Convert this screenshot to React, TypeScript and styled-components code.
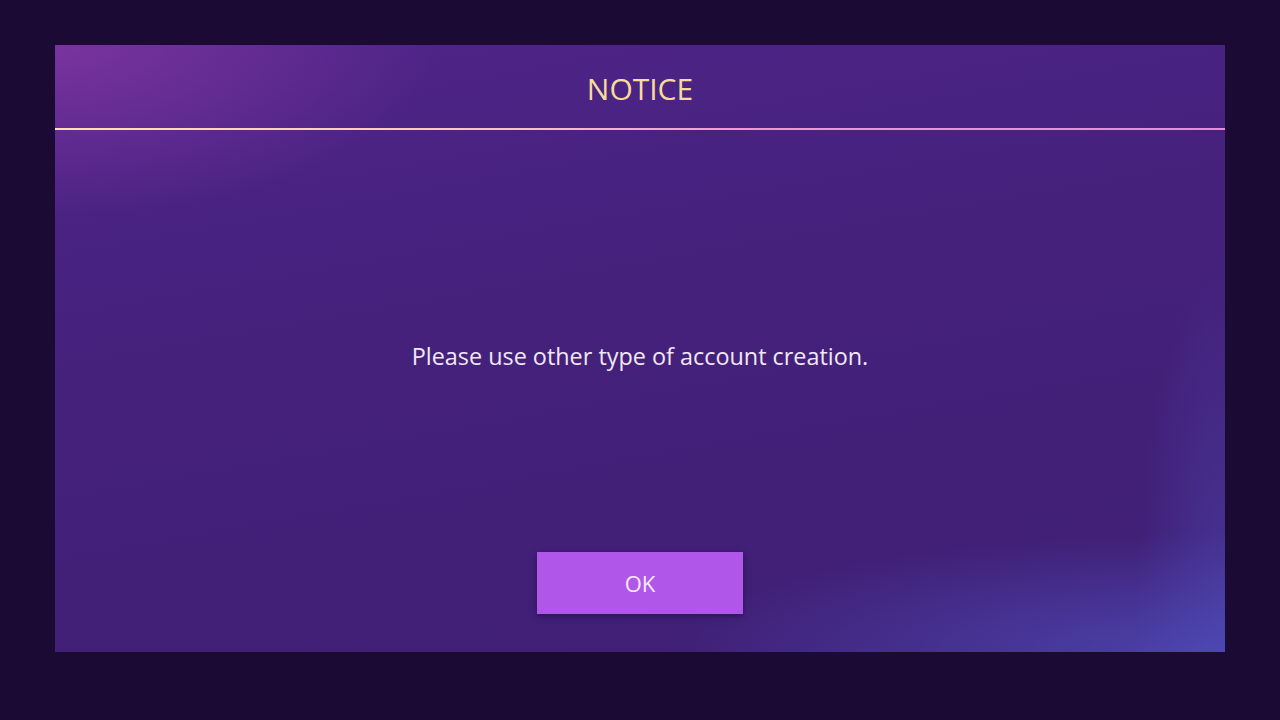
import styled, { createGlobalStyle } from "styled-components";

const GlobalStyle = createGlobalStyle`
  html, body {
    margin: 0;
    padding: 0;
    background: #1a0b35;
  }
  body {
    font-family: "Open Sans", "Noto Sans", sans-serif;
  }
`;

const Screen = styled.div`
  width: 1280px;
  height: 720px;
  background: #1a0a34;
  padding: 45px 55px 0 55px;
  box-sizing: border-box;
`;

const Dialog = styled.div`
  width: 1170px;
  height: 607px;
  display: flex;
  flex-direction: column;
  background:
    radial-gradient(ellipse 560px 120px at 100% 100%, rgba(78, 76, 185, 0.8) 0%, rgba(78, 76, 185, 0) 100%),
    radial-gradient(ellipse 90px 400px at 100% 100%, rgba(78, 76, 185, 0.5) 0%, rgba(78, 76, 185, 0) 100%),
    radial-gradient(ellipse 380px 170px at 0% 0%, rgba(128, 54, 162, 0.85) 0%, rgba(128, 54, 162, 0) 100%),
    linear-gradient(170deg, #50258a 0%, #45217c 40%, #3f1f74 100%);
`;

const Header = styled.div`
  height: 83px;
  display: flex;
  align-items: center;
  justify-content: center;
`;

const Title = styled.h1`
  margin: 0;
  font-size: 30px;
  font-weight: 400;
  color: #f6dc98;
  padding-top: 4px;
`;

const Divider = styled.div`
  height: 2px;
  background: linear-gradient(90deg, #ffe0b0 0%, #f5c6c0 40%, #ec98d8 60%, #e58ce0 100%);
`;

const Body = styled.div`
  flex: 1;
  display: flex;
  flex-direction: column;
  align-items: center;
  padding-bottom: 38px;
`;

const MessageArea = styled.div`
  flex: 1;
  display: flex;
  align-items: center;
  justify-content: center;
  padding-top: 30px;
`;

const Message = styled.p`
  margin: 0;
  font-size: 23.4px;
  color: #f1e8f6;
  line-height: 30px;
`;

const OkButton = styled.button`
  width: 206px;
  height: 62px;
  border: 0;
  background: #b056e8;
  color: #fbeaf8;
  font-family: inherit;
  font-size: 22px;
  box-shadow: 0 2px 6px rgba(20, 5, 50, 0.5);
  cursor: pointer;
`;

export default function App() {
  return (
    <>
      <GlobalStyle />
      <Screen>
        <Dialog>
          <Header>
            <Title>NOTICE</Title>
          </Header>
          <Divider />
          <Body>
            <MessageArea>
              <Message>Please use other type of account creation.</Message>
            </MessageArea>
            <OkButton>OK</OkButton>
          </Body>
        </Dialog>
      </Screen>
    </>
  );
}
